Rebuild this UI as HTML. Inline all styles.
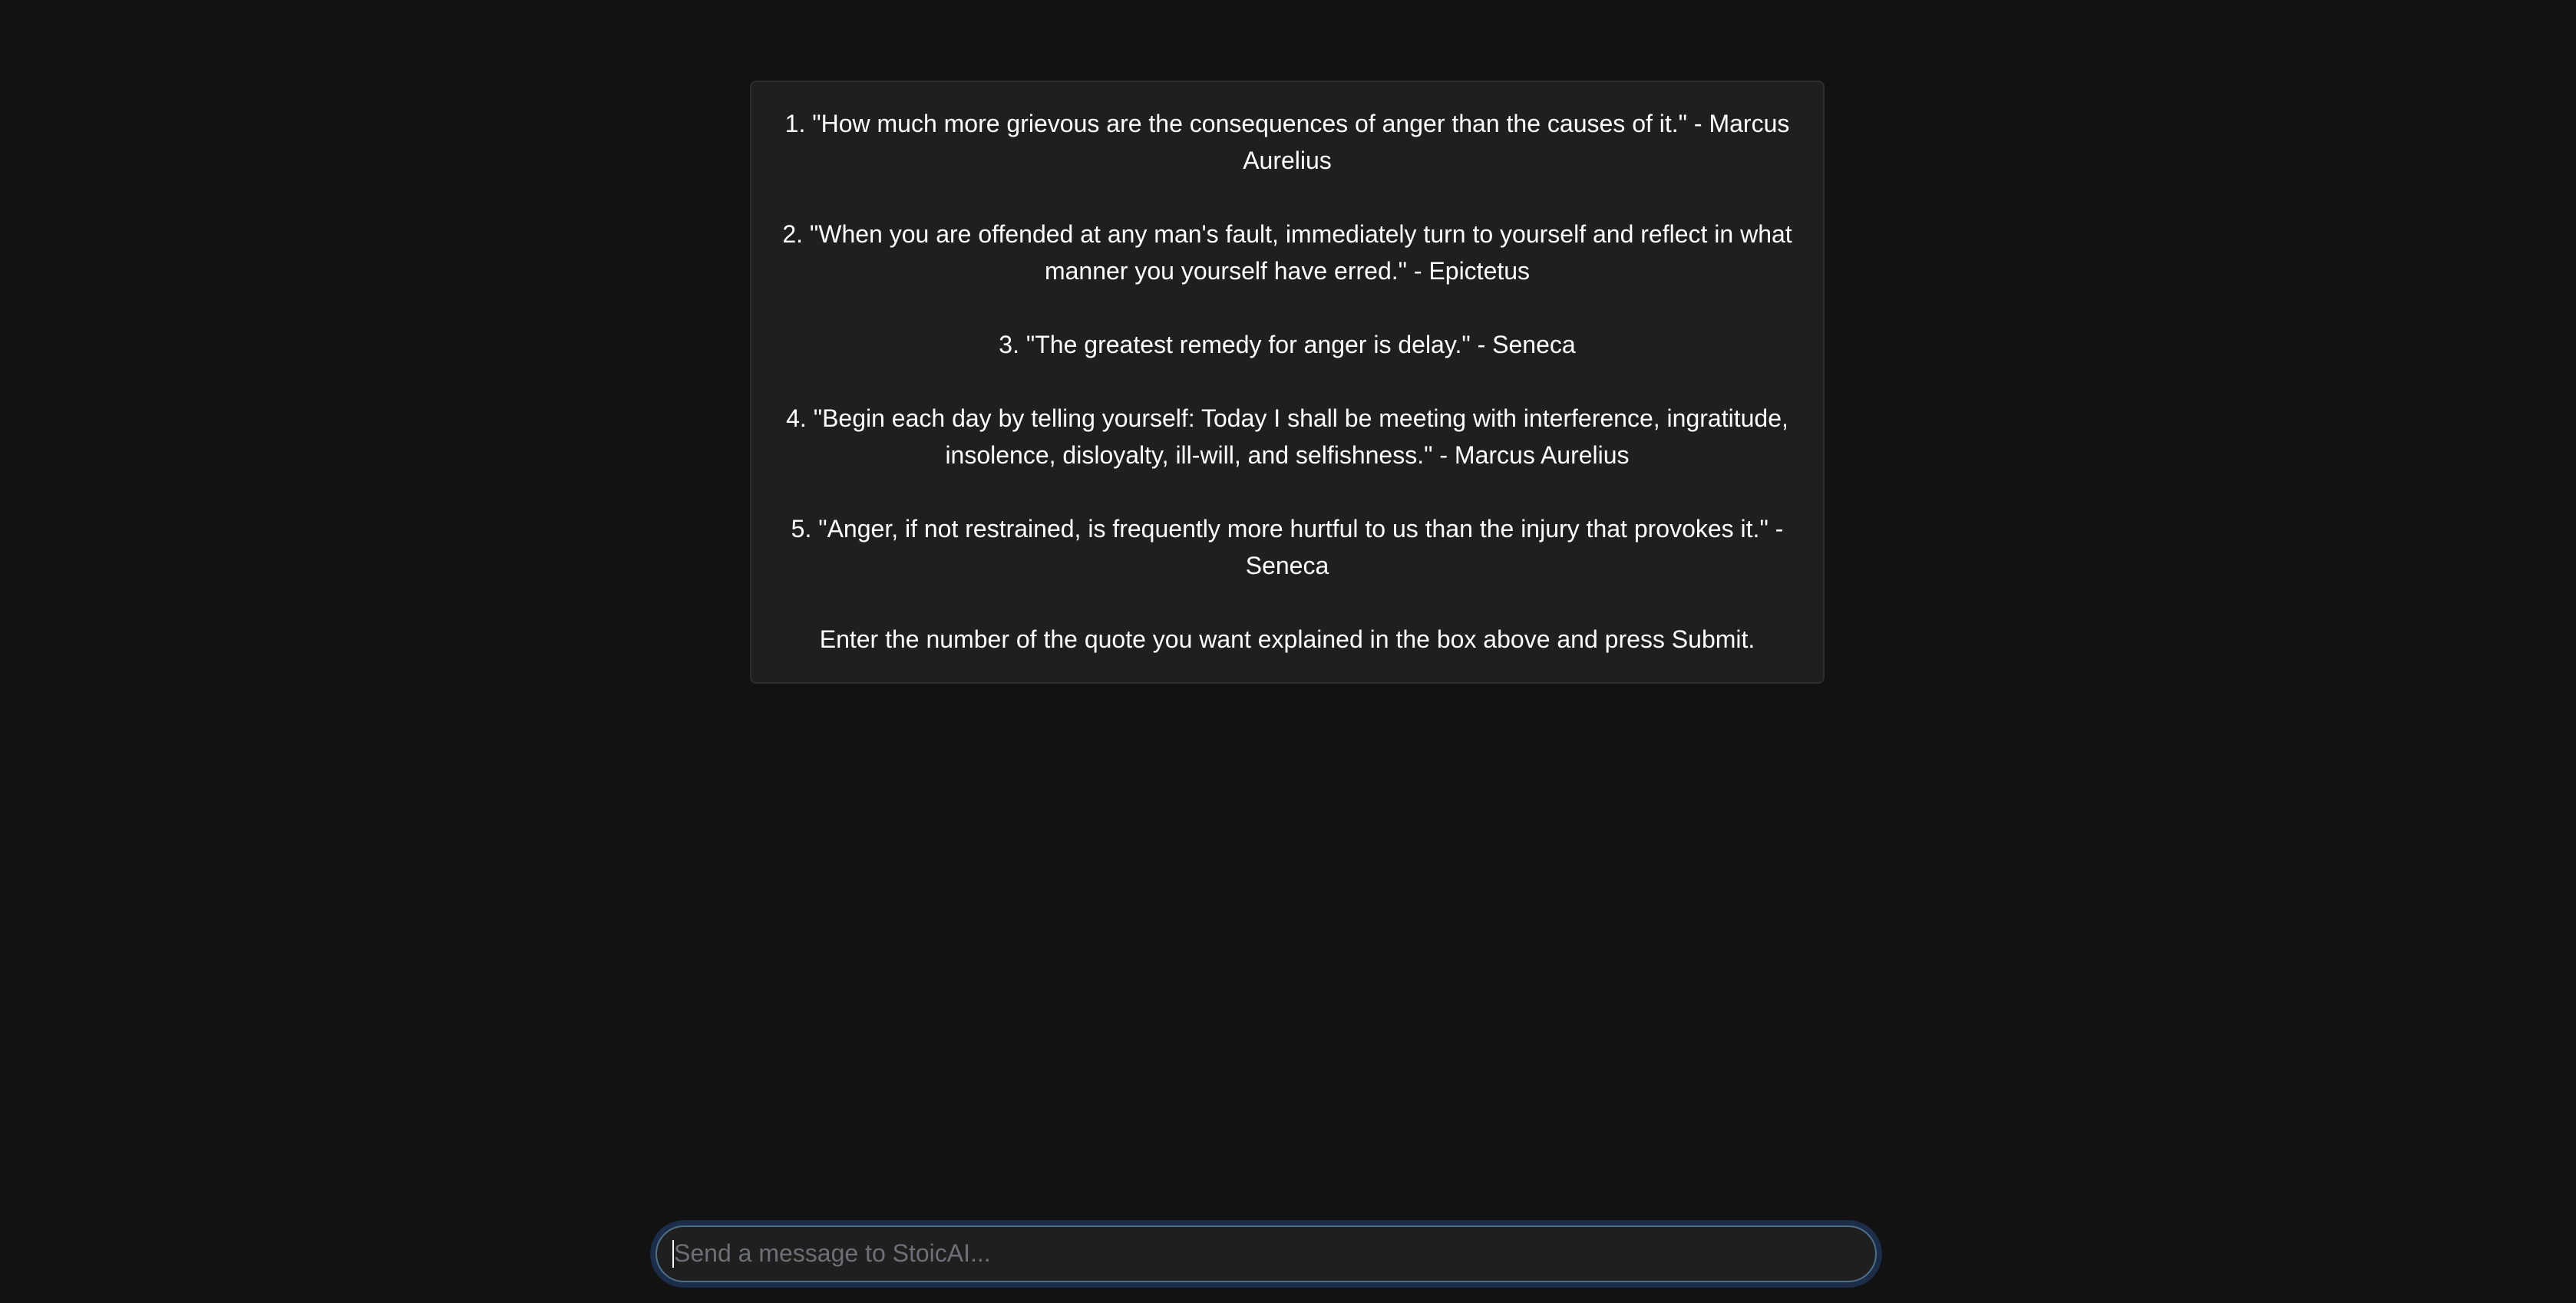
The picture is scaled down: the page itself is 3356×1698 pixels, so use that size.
<!DOCTYPE html>
<html><head><meta charset="utf-8"><style>
html,body{margin:0;padding:0;width:3356px;height:1698px;background:#121212;overflow:hidden;font-family:"Liberation Sans",Arial,sans-serif;}
.box{position:absolute;left:977px;top:105px;width:1396px;height:782px;box-sizing:content-box;background:#1f1f1f;border:2px solid #2e2e2e;border-radius:8px;}
.txt{padding:30px 38px;color:#fff;font-size:32px;line-height:48px;text-align:center;white-space:pre-wrap;}
.ring{position:absolute;left:847px;top:1590px;width:1605px;height:88px;box-sizing:border-box;border-radius:44px;background:#1b2d48;}
.inp{position:absolute;left:854px;top:1597px;width:1591px;height:74px;box-sizing:border-box;border-radius:37px;border:2px solid #4d6f86;background:#1f1f1f;}
.ph{position:absolute;left:878px;top:1609px;font-size:32px;line-height:48px;color:#6c7076;}
.caret{position:absolute;left:876px;top:1616px;width:2px;height:36px;background:#fff;}
</style></head><body>
<div class="box"><div class="txt">1. "How much more grievous are the consequences of anger than the causes of it." - Marcus Aurelius

2. "When you are offended at any man's fault, immediately turn to yourself and reflect in what manner you yourself have erred." - Epictetus

3. "The greatest remedy for anger is delay." - Seneca

4. "Begin each day by telling yourself: Today I shall be meeting with interference, ingratitude, insolence, disloyalty, ill-will, and selfishness." - Marcus Aurelius

5. "Anger, if not restrained, is frequently more hurtful to us than the injury that provokes it." - Seneca

Enter the number of the quote you want explained in the box above and press Submit.</div></div>
<div class="ring"></div>
<div class="inp"></div>
<div class="ph">Send a message to StoicAI...</div>
<div class="caret"></div>
</body></html>
